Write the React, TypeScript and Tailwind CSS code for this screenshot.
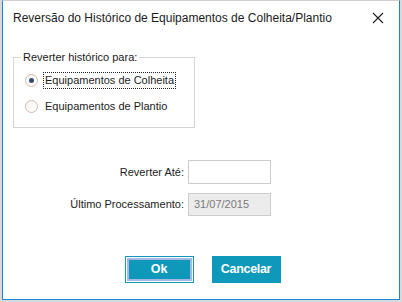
import React, { useState } from "react";

/* Reversão do Histórico — dialog */

const font = { fontFamily: "'Liberation Sans', Arial, sans-serif" };

export default function App() {
  const [choice, setChoice] = useState<"colheita" | "plantio">("colheita");

  return (
    <div className="w-[402px] h-[302px] bg-[#d9d9d9] pl-[2px] pr-[2px] pb-[2px]" style={font}>
      <div className="w-full h-full bg-white border border-t-[#cfcfcf] border-x-[#1a84d8] border-b-[#1a84d8] flex flex-col text-[#1b1b1b]">
        {/* title bar */}
        <div className="h-[33px] flex items-center justify-between pl-[10px] pr-[14px] shrink-0">
          <span className="text-[12px] whitespace-nowrap">
            Reversão do Histórico de Equipamentos de Colheita/Plantio
          </span>
          <svg width="12" height="12" viewBox="0 0 12 12" className="mr-[1px]">
            <path d="M1 1 L11 11 M11 1 L1 11" stroke="#1b1b1b" strokeWidth="1.1" />
          </svg>
        </div>

        {/* group box */}
        <div className="ml-[10px] mt-[16px] w-[182px] relative">
          <fieldset className="border border-[#d5d5d5] h-[78px] px-[9px] pt-[0px]">
            <legend className="text-[11px] px-[2px] -ml-[2px] leading-[14px] whitespace-nowrap">
              Reverter histórico para:
            </legend>
            <div className="flex flex-col gap-[9px] mt-[8px]">
              <Radio
                label="Equipamentos de Colheita"
                checked={choice === "colheita"}
                focused
                onClick={() => setChoice("colheita")}
              />
              <Radio
                label="Equipamentos de Plantio"
                checked={choice === "plantio"}
                onClick={() => setChoice("plantio")}
              />
            </div>
          </fieldset>
        </div>

        {/* fields */}
        <div className="mt-[32px] flex flex-col gap-[9px]">
          <div className="flex items-center">
            <span className="w-[182px] text-right text-[11px] pr-[1px] whitespace-nowrap">Reverter Até:</span>
            <input className="ml-[3px] w-[83px] h-[24px] border border-[#cccccc] bg-white outline-none text-[11px] px-[4px]" />
          </div>
          <div className="flex items-center">
            <span className="w-[182px] text-right text-[11px] pr-[1px] whitespace-nowrap">Último Processamento:</span>
            <div className="ml-[3px] w-[83px] h-[23px] border border-[#cccccc] bg-[#ececec] text-[11px] text-[#7a7a7a] flex items-center px-[5px]">
              31/07/2015
            </div>
          </div>
        </div>

        {/* buttons */}
        <div className="mt-[40px] flex justify-center gap-[18px] pl-[3px]">
          <button className="w-[69px] h-[27px] border border-[#0e98ba] p-[1px] bg-white">
            <span className="w-full h-full flex items-center justify-center bg-[#0e98ba] border-2 border-[#a6b7e3] text-white text-[12.5px] font-bold">
              Ok
            </span>
          </button>
          <button className="w-[69px] h-[27px] bg-[#0e98ba] text-white text-[12.5px] font-bold tracking-[-0.3px] flex items-center justify-center">
            Cancelar
          </button>
        </div>
      </div>
    </div>
  );
}

function Radio({
  label,
  checked,
  focused,
  onClick,
}: {
  label: string;
  checked: boolean;
  focused?: boolean;
  onClick: () => void;
}) {
  return (
    <div className="flex items-center cursor-pointer" onClick={onClick}>
      <span className="w-[13px] h-[13px] rounded-full border border-[#d9b9a8] bg-gradient-to-br from-[#f4f4f4] to-white flex items-center justify-center ml-[2px]">
        {checked && <span className="w-[5px] h-[5px] rounded-full bg-[#3b4a6b]" />}
      </span>
      <span
        className={`ml-[5px] text-[11px] px-[1px] leading-[15px] whitespace-nowrap border border-dotted ${
          focused ? "border-[#222]" : "border-transparent"
        }`}
      >
        {label}
      </span>
    </div>
  );
}
